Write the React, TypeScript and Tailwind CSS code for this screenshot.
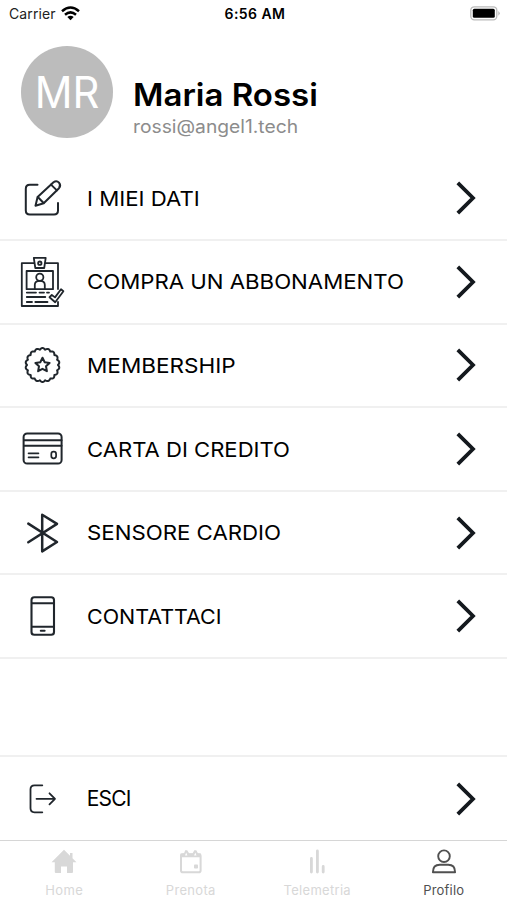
import type { ReactNode } from "react";

// scalloped outline of the membership seal
const sealPath = () => {
    const bumps = 18;
    const steps = bumps * 10;
    const points: string[] = [];
    for (let i = 0; i < steps; i++) {
        const a = (i / steps) * Math.PI * 2 - Math.PI / 2;
        const r = 15.5 + 1.5 * Math.abs(Math.cos((i / steps) * bumps * Math.PI));
        points.push(`${(24.5 + Math.cos(a) * r).toFixed(2)} ${(28 + Math.sin(a) * r).toFixed(2)}`);
    }
    return `M${points.join("L")}Z`;
};

const RowIcon = ({ children, width = 2 }: { children: ReactNode; width?: number }) => (
    <svg
        className="w-12 h-14 shrink-0"
        viewBox="0 0 48 56"
        fill="none"
        stroke="#20262c"
        strokeWidth={width}
        strokeLinecap="round"
        strokeLinejoin="round"
    >
        {children}
    </svg>
);

const EditIcon = () => (
    <RowIcon>
        <path d="M19.5 14.7H11.8q-4 0-4 4V40.5q0 4 4 4H36q4 0 4-4V33" />
        <path d="M17.5 35.7L19.6 27L35.5 12.3Q38.5 10 41 12.6Q43.3 15.5 41 18.2L25.7 33.2Z" />
        <path d="M19.8 27l5.8 6M33 14.6l5.9 5.8" />
    </RowIcon>
);

const BadgeIcon = () => (
    <RowIcon width={1.8}>
        <path d="M16.2 9.2H3.8V52H40V48M40 35V9.2H27.4" />
        <path d="M15.8 3.8H27.7L26.2 14H17.3Z" />
        <circle cx="21.8" cy="9.2" r="1.7" />
        <rect x="8.6" y="17" width="26.4" height="18.2" />
        <circle cx="21.8" cy="23.2" r="3.6" />
        <path d="M16.8 35v-4.2q0-4 5-4t5 4V35" />
        <path d="M8.8 38.6H18M21.5 38.6H26M29 38.6H31M8.8 43H27.3M8.8 48H14M17.3 48H29.5" />
        <path d="M31.5 43.2L33.8 41L37 43.4L43 35.3L45.4 37.2L37.2 48.2Z" />
    </RowIcon>
);

const SealIcon = () => (
    <RowIcon>
        <path d={sealPath()} />
        <path d="M24.5 20.7L26.7 25.2L31.6 25.9L28 29.3L28.9 34.2L24.5 31.8L20.1 34.2L21 29.3L17.4 25.9L22.3 25.2Z" />
    </RowIcon>
);

const CardIcon = () => (
    <RowIcon>
        <rect x="5.6" y="12.5" width="38" height="30" rx="3.6" />
        <path d="M6 19.2H43.5M6 24.8H43.5" />
        <path d="M10.5 32.4H20.5M10.5 36.4H20.5" strokeWidth="1.6" />
        <rect x="33.3" y="30.6" width="4.8" height="6.8" rx="2.3" strokeWidth="1.7" />
    </RowIcon>
);

const BluetoothIcon = () => (
    <RowIcon width={2.5}>
        <path d="M10.3 18.6L39 37L24.2 46.4V9.7L39 18.9L10.3 37.3" />
    </RowIcon>
);

const PhoneIcon = () => (
    <RowIcon width={2.1}>
        <rect x="13.5" y="9.3" width="22.5" height="37.4" rx="2.8" />
        <path d="M14 15.2H35.5M14 38.7H35.5M22.8 42.8H26.6" />
    </RowIcon>
);

const ExitIcon = () => (
    <RowIcon width={1.8}>
        <path d="M24.3 14.3H16.5q-4 0-4 4V37.3q0 4 4 4H24.3" />
        <path d="M18.5 27.8H37M31.5 22.3L37 27.8L31.5 33.3" />
    </RowIcon>
);

const items = [
    { label: "I MIEI DATI", icon: <EditIcon />, textClass: "text-[20px] scale-x-[1.11]" },
    { label: "COMPRA UN ABBONAMENTO", icon: <BadgeIcon />, textClass: "text-[20px] scale-x-[1.11]" },
    { label: "MEMBERSHIP", icon: <SealIcon />, textClass: "text-[20px] scale-x-[1.127]" },
    { label: "CARTA DI CREDITO", icon: <CardIcon />, textClass: "text-[20px] scale-x-[1.104]" },
    { label: "SENSORE CARDIO", icon: <BluetoothIcon />, textClass: "text-[20px] scale-x-[1.112]" },
    { label: "CONTATTACI", icon: <PhoneIcon />, textClass: "text-[20px] scale-x-[1.072]" },
];

const MenuRow = ({ label, icon, textClass }: { label: string; icon: ReactNode; textClass: string }) => (
    <button className="flex w-full h-full items-center pl-[18px] pr-[31px] text-left">
        {icon}
        <span className={`ml-[20.7px] mr-auto origin-left whitespace-nowrap pt-px leading-6 text-black ${textClass}`}>{label}</span>
        <svg className="w-5 h-9 shrink-0" viewBox="0 0 20 36" fill="none" stroke="#14191e" strokeWidth="3.8">
            <path d="M1.8 2.8L17 18L1.8 33.2" />
        </svg>
    </button>
);

const StatusBar = () => (
    <div className="grid h-[27px] grid-cols-3 items-center pl-[9px] pr-[6px] text-[14px] text-[#222]">
        <div className="flex items-center gap-[5px]">
            <span className="tracking-[0.1px]">Carrier</span>
            <svg className="w-[19px] h-[15px]" viewBox="0 0 19 15" fill="none" stroke="#000" strokeWidth="2.5">
                <path d="M1 5.2Q9.5-2.2 18 5.2M4 8.7Q9.5 4 15 8.7" />
                <path d="M9.5 14.2L6.3 11Q9.5 8.6 12.7 11Z" fill="#000" stroke="none" />
            </svg>
        </div>
        <span className="text-center font-semibold tracking-[0.45px] text-black">6:56 AM</span>
        <svg className="w-[31px] h-[15px] justify-self-end" viewBox="0 0 31 15">
            <rect x="0.8" y="0.8" width="26" height="13" rx="3.5" fill="#fff" stroke="#bbb" strokeWidth="1.3" />
            <rect x="2.8" y="2.8" width="22" height="9" rx="1.5" fill="#000" />
            <path d="M28.3 5Q31.2 7.3 28.3 9.7Z" fill="#bbb" />
        </svg>
    </div>
);

const tabs = [
    {
        label: "Home",
        tracking: "tracking-[0.4px]",
        icon: (
            <path d="M14 1.8L1.5 14.2H4.8V24q0 1 1 1H11V18.5h6V25h5q1 0 1-1V14.2H26.5L22.5 10.2V5H20V7.7Z" fill="currentColor" />
        ),
    },
    {
        label: "Prenota",
        tracking: "tracking-[0.3px]",
        icon: (
            <>
                <rect x="4" y="6.2" width="19.6" height="18" rx="1.8" fill="none" stroke="currentColor" strokeWidth="2" />
                <path d="M3.5 5.5H7L8.2 2.2H10.2L12.2 5.5H15.5L17.3 2.2H19.3L21 5.5H24V9.2H3.5Z" fill="currentColor" />
                <path d="M9.2 4.6L10.4 7.6H8ZM18.3 4.6L19.5 7.6H17.1Z" fill="#fff" />
                <rect x="17" y="16.6" width="4" height="4" rx="0.8" fill="currentColor" />
            </>
        ),
    },
    {
        label: "Telemetria",
        tracking: "tracking-[0.3px]",
        icon: <path d="M8.4 10.5V24M14.4 3V24M20.2 18.5V24" stroke="currentColor" strokeWidth="2.8" strokeLinecap="round" />,
    },
    {
        label: "Profilo",
        tracking: "tracking-[0.2px]",
        active: true,
        icon: (
            <g fill="none" stroke="currentColor" strokeWidth="1.9" strokeLinejoin="round">
                <circle cx="14" cy="8.2" r="5.8" />
                <path d="M2.9 24.2Q2.9 16.8 9.8 16.8H18.2Q25.1 16.8 25.1 24.2Z" />
            </g>
        ),
    },
];

const TabBar = () => (
    <nav className="grid h-[60px] grid-cols-4 border-t border-[#d6d6d6] bg-white pl-px">
        {tabs.map((tab) => (
            <div
                key={tab.label}
                className={`flex flex-col items-center pt-[7px] ${tab.active ? "text-[#505050]" : "text-[#d8d8d8]"}`}
            >
                <svg className="w-7 h-7" viewBox="0 0 28 28">
                    {tab.icon}
                </svg>
                <span className={`mt-[6px] text-[13px] leading-4 ${tab.tracking}`}>{tab.label}</span>
            </div>
        ))}
    </nav>
);

export default function App() {
    return (
        <div className="flex h-[900px] w-[507px] flex-col overflow-hidden bg-white font-['Inter','Liberation_Sans',sans-serif]">
            <StatusBar />
            <header className="flex h-[130.5px] items-start pl-[21px] pt-[18.5px]">
                <div className="flex size-[92px] items-center justify-center rounded-full bg-[#bcbcbc] text-[44px] text-white">
                    <span className="scale-x-[0.95]">MR</span>
                </div>
                <div className="ml-[20px] pt-[29px]">
                    <h1 className="origin-left scale-x-[1.065] text-[31px] leading-10 font-semibold text-black">Maria Rossi</h1>
                    <p className="origin-left scale-x-[1.07] text-[18px] leading-6 text-[#8c8c8c]">rossi@angel1.tech</p>
                </div>
            </header>
            <ul>
                {items.map((item) => (
                    <li key={item.label} className="h-[83.6px] border-b-2 border-[#f0f0f0]">
                        <MenuRow {...item} />
                    </li>
                ))}
            </ul>
            <div className="mt-auto h-[85px] border-t-2 border-[#f0f0f0]">
                <MenuRow label="ESCI" icon={<ExitIcon />} textClass="text-[21px] tracking-[-0.8px]" />
            </div>
            <TabBar />
        </div>
    );
}
